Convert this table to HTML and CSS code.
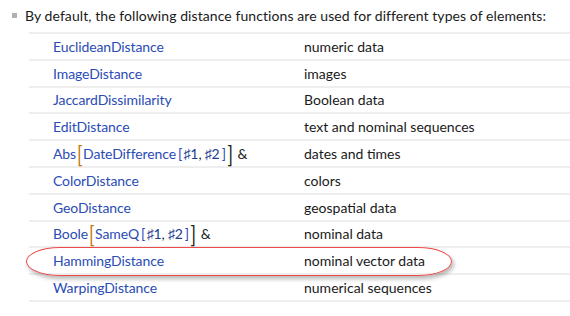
FILE: index.html
```html
<!DOCTYPE html>
<html>
<head>
<meta charset="utf-8">
<link rel="stylesheet" href="styles.css">
</head>
<body>
<div class="intro"><span class="bullet"></span><span class="intro-text">By default, the following distance functions are used for different types of elements:</span></div>
<div class="table">
  <div class="row"><div class="fn"><span class="link">EuclideanDistance</span></div><div class="desc">numeric data</div></div>
  <div class="row"><div class="fn"><span class="link">ImageDistance</span></div><div class="desc">images</div></div>
  <div class="row"><div class="fn"><span class="link">JaccardDissimilarity</span></div><div class="desc">Boolean data</div></div>
  <div class="row"><div class="fn"><span class="link">EditDistance</span></div><div class="desc">text and nominal sequences</div></div>
  <div class="row"><div class="fn"><span class="link">Abs</span><span class="bigb open">[</span><span class="link">DateDifference</span><span class="sb">[</span><span class="slot">♯1</span><span class="comma">,</span><span class="slot">♯2</span><span class="sb">]</span><span class="bigb close">]</span><span class="amp">&amp;</span></div><div class="desc">dates and times</div></div>
  <div class="row"><div class="fn"><span class="link">ColorDistance</span></div><div class="desc">colors</div></div>
  <div class="row"><div class="fn"><span class="link">GeoDistance</span></div><div class="desc">geospatial data</div></div>
  <div class="row"><div class="fn"><span class="link">Boole</span><span class="bigb open">[</span><span class="link">SameQ</span><span class="sb">[</span><span class="slot">♯1</span><span class="comma">,</span><span class="slot">♯2</span><span class="sb">]</span><span class="bigb close">]</span><span class="amp">&amp;</span></div><div class="desc">nominal data</div></div>
  <div class="row highlight"><div class="fn"><span class="link">HammingDistance</span></div><div class="desc">nominal vector data</div><div class="oval"></div></div>
  <div class="row"><div class="fn"><span class="link">WarpingDistance</span></div><div class="desc">numerical sequences</div></div>
</div>
</body>
</html>
```
FILE: styles.css
```css
html, body {
  margin: 0;
  padding: 0;
  background: #ffffff;
}
body {
  font-family: Lato, "Noto Sans", sans-serif;
  font-size: 14px;
  color: #1a1a1a;
  overflow: hidden;
}
.intro {
  display: flex;
  align-items: center;
  height: 32px;
  padding-left: 12px;
  padding-bottom: 2px;
  box-sizing: border-box;
}
.intro-text {
  letter-spacing: 0.08px;
}
.bullet {
  width: 5px;
  height: 5px;
  background: #b0b0b0;
  margin-right: 8px;
}
.table {
  margin-left: 29px;
  border-top: 2px solid #eeeeee;
}
.row {
  position: relative;
  display: grid;
  grid-template-columns: 275px 1fr;
  align-items: center;
  height: 24.8px;
  border-bottom: 2px solid #eeeeee;
}
.fn {
  padding-left: 24px;
  display: flex;
  align-items: center;
  white-space: nowrap;
}
.link {
  color: #2a4cb4;
  letter-spacing: -0.1px;
}
.desc {
  white-space: nowrap;
}
.bigb {
  display: inline-block;
  font-size: 18px;
  line-height: 14px;
  font-weight: 400;
  transform: scaleY(1.25);
  margin: 0 0.5px;
}
.bigb.open {
  color: #c27a0c;
  margin-left: 1px;
}
.bigb.close {
  color: #222;
}
.sb {
  color: #2a4cb4;
  margin: 0 1px 0 2px;
}
.slot {
  color: #233c8e;
}
.comma {
  color: #222;
  margin-right: 3px;
}
.amp {
  margin-left: 4px;
  color: #222;
}
.oval {
  position: absolute;
  left: -3px;
  top: -1px;
  width: 426px;
  height: 29px;
  box-sizing: border-box;
  border: 1.5px solid #ee4a4a;
  border-radius: 34px / 14.5px;
  box-shadow: 2px 3px 4px rgba(0, 0, 0, 0.28);
  pointer-events: none;
}
```
